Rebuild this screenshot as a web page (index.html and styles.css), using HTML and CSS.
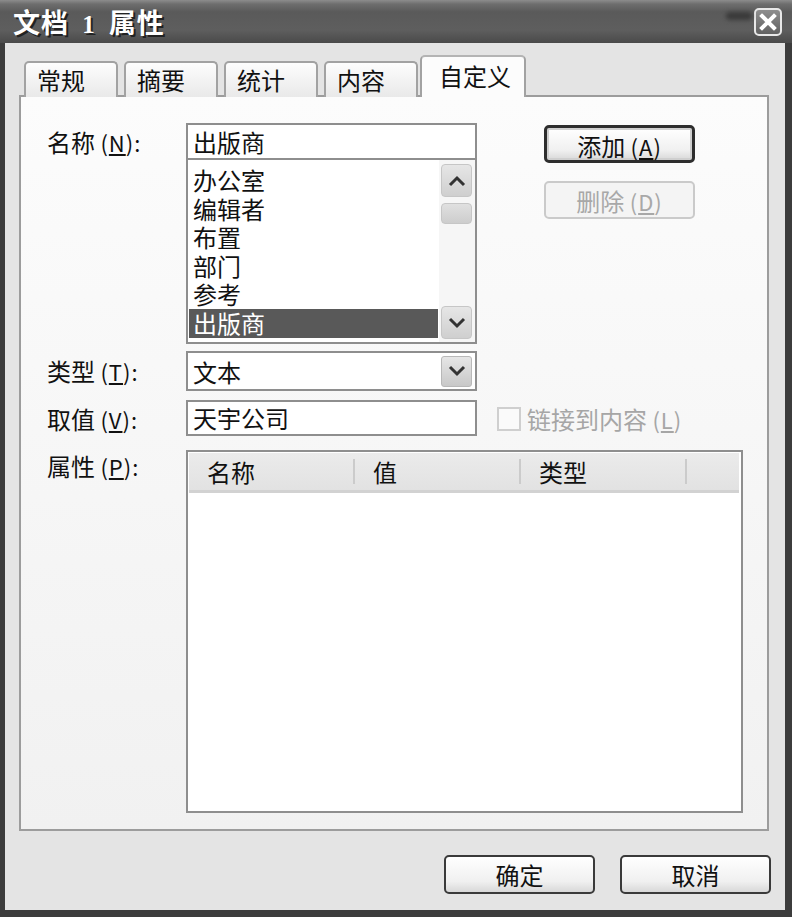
FILE: index.html
```html
<!DOCTYPE html>
<html lang="zh-CN">
<head>
    <meta charset="UTF-8">
    <title>文档 1 属性</title>
    <link rel="stylesheet" href="styles.css">
</head>
<body>
    <div class="window">
        <div class="titlebar">
            <span class="title">文档 <span class="num">1</span> 属性</span>
            <span class="swoosh"></span>
            <span class="close">
                <svg width="18" height="18" viewBox="0 0 18 18">
                    <path d="M3 3 L15 15 M15 3 L3 15" stroke="#fff" stroke-width="4" stroke-linecap="square"/>
                </svg>
            </span>
        </div>

        <div class="body">
            <div class="tabs">
                <div class="tab">常规</div>
                <div class="tab">摘要</div>
                <div class="tab">统计</div>
                <div class="tab">内容</div>
                <div class="tab active">自定义</div>
            </div>

            <div class="panel">
                <div class="row top-row">
                    <div class="lbl">名称 <span class="key">(<u>N</u>):</span></div>
                    <div class="name-col">
                        <div class="field name-field">出版商</div>
                        <div class="listbox">
                            <div class="items">
                                <div class="item">办公室</div>
                                <div class="item">编辑者</div>
                                <div class="item">布置</div>
                                <div class="item">部门</div>
                                <div class="item">参考</div>
                                <div class="item selected">出版商</div>
                            </div>
                            <div class="scrollbar">
                                <div class="sb-btn">
                                    <svg width="18" height="12" viewBox="0 0 18 12"><path d="M2 10 L9 3 L16 10" fill="none" stroke="#333" stroke-width="3"/></svg>
                                </div>
                                <div class="sb-thumb"></div>
                                <div class="sb-track"></div>
                                <div class="sb-btn">
                                    <svg width="18" height="12" viewBox="0 0 18 12"><path d="M2 2 L9 9 L16 2" fill="none" stroke="#333" stroke-width="3"/></svg>
                                </div>
                            </div>
                        </div>
                    </div>
                    <div class="side-buttons">
                        <button class="btn default">添加 <span class="key">(<u>A</u>)</span></button>
                        <button class="btn disabled">删除 <span class="key">(<u>D</u>)</span></button>
                    </div>
                </div>

                <div class="row type-row">
                    <div class="lbl">类型 <span class="key">(<u>T</u>):</span></div>
                    <div class="field combo">
                        <span>文本</span>
                        <span class="drop">
                            <svg width="18" height="12" viewBox="0 0 18 12"><path d="M2 2 L9 9 L16 2" fill="none" stroke="#333" stroke-width="3"/></svg>
                        </span>
                    </div>
                </div>

                <div class="row value-row">
                    <div class="lbl">取值 <span class="key">(<u>V</u>):</span></div>
                    <div class="field value-field">天宇公司</div>
                    <div class="check">
                        <span class="box"></span>
                        <span>链接到内容 <span class="key">(<u>L</u>)</span></span>
                    </div>
                </div>

                <div class="row props-row">
                    <div class="lbl props-lbl">属性 <span class="key">(<u>P</u>):</span></div>
                    <div class="listview">
                        <div class="lv-head">
                            <div class="col">名称</div>
                            <div class="col">值</div>
                            <div class="col">类型</div>
                            <div class="col last"></div>
                        </div>
                    </div>
                </div>
            </div>

            <div class="footer">
                <button class="btn">确定</button>
                <button class="btn">取消</button>
            </div>
        </div>
    </div>
</body>
</html>
```

FILE: styles.css
```css
body {
    margin: 0;
    font-family: "Noto Sans CJK SC", "DejaVu Sans", sans-serif;
    font-size: 24px;
    color: #111;
    background: #fff;
}
.window {
    width: 792px;
    height: 917px;
    background: #3c3c3c;
    display: flex;
    flex-direction: column;
}
.titlebar {
    height: 43px;
    box-sizing: border-box;
    display: flex;
    align-items: center;
    padding: 0 10px 0 13px;
    background: linear-gradient(#8c8c8c 0, #6e6e6e 4px, #5a5a5a 12px, #5e5e5e 30px, #4a4a4a 43px);
}
.title {
    color: #fff;
    font-weight: bold;
    font-size: 27px;
    letter-spacing: 1px;
    word-spacing: 6px;
    text-shadow: 2px 2px 0 #222;
    flex: 1;
}
.title .num {
    font-family: "Liberation Serif", serif;
    font-size: 25px;
}
.swoosh {
    width: 26px;
    height: 8px;
    margin-right: 2px;
    border-radius: 4px;
    background: #3a3a3a;
    filter: blur(2px);
    align-self: flex-start;
    margin-top: 12px;
}
.close {
    width: 28px;
    height: 28px;
    box-sizing: border-box;
    border: 2px solid #e8e8e8;
    border-radius: 5px;
    background: linear-gradient(#8e8e8e, #626262);
    display: flex;
    align-items: center;
    justify-content: center;
    margin-top: 1px;
}
.body {
    flex: 1;
    margin: 0 7px 7px 5px;
    background: #e4e4e4;
    padding: 14px 14px 0 14px;
    display: flex;
    flex-direction: column;
}

/* tabs */
.tabs {
    display: flex;
    align-items: flex-end;
    height: 40px;
    padding-left: 5px;
    position: relative;
    z-index: 1;
    margin-bottom: -2px;
}
.tab {
    width: 94px;
    height: 36px;
    box-sizing: border-box;
    margin-right: 6px;
    padding-left: 11px;
    line-height: 34px;
    border: 2px solid #a2a2a2;
    border-bottom: none;
    border-radius: 5px 5px 0 0;
    background: linear-gradient(#fdfdfd, #e9e9e9);
}
.tab.active {
    width: 106px;
    height: 42px;
    margin-left: -4px;
    padding-left: 17px;
    line-height: 38px;
    background: #fcfcfc;
    border-top-color: #b4b4b4;
}
.panel {
    height: 736px;
    box-sizing: border-box;
    margin-right: 2px;
    border: 2px solid #9c9c9c;
    background: linear-gradient(#fcfcfc, #f1f1f1);
    padding: 26px 0 0 26px;
}

/* rows */
.row {
    display: flex;
    align-items: flex-start;
}
.lbl {
    width: 139px;
    flex-shrink: 0;
    line-height: 37px;
}
.key {
    font-size: 22px;
    letter-spacing: 1px;
}
.field {
    width: 291px;
    box-sizing: border-box;
    border: 2px solid #8e8e8e;
    background: #fff;
    padding-left: 5px;
}
.name-field {
    height: 37px;
    line-height: 33px;
}
.listbox {
    width: 291px;
    height: 184px;
    box-sizing: border-box;
    border: 2px solid #8e8e8e;
    border-top: none;
    background: #fff;
    display: flex;
}
.items {
    flex: 1;
    padding: 6px 1px 0 1px;
}
.item {
    height: 28.6px;
    line-height: 28.6px;
    padding-left: 4px;
}
.item.selected {
    background: #595959;
    color: #fff;
}
.scrollbar {
    width: 36px;
    display: flex;
    flex-direction: column;
    padding: 4px 3px 3px 2px;
    box-sizing: border-box;
    background: #f6f6f6;
}
.sb-btn {
    height: 31px;
    border: 1px solid #c6c6c6;
    border-radius: 4px;
    background: linear-gradient(#e6e6e6, #cfcfcf);
    display: flex;
    align-items: center;
    justify-content: center;
}
.sb-thumb {
    height: 19px;
    margin-top: 6px;
    border: 1px solid #c6c6c6;
    border-radius: 4px;
    background: linear-gradient(#e0e0e0, #cdcdcd);
}
.sb-track {
    flex: 1;
}
.side-buttons {
    display: flex;
    flex-direction: column;
    gap: 18px;
    margin: 2px 0 0 67px;
}
.btn {
    width: 151px;
    height: 38px;
    box-sizing: border-box;
    font-family: inherit;
    font-size: 24px;
    color: #111;
    border: 2px solid #3a3a3a;
    border-radius: 5px;
    background: linear-gradient(#ffffff, #f0f0f0 70%, #d8d8d8);
    padding: 0;
}
.btn.default {
    border: 3px solid #2e2e2e;
    box-shadow: inset 0 0 0 2px #cfcfcf;
}
.btn.disabled {
    color: #a8a8a8;
    border-color: #cacaca;
    background: #f4f4f4;
}
.type-row {
    margin-top: 7px;
}
.type-row .lbl {
    line-height: 40px;
}
.combo {
    height: 40px;
    display: flex;
    align-items: center;
    justify-content: space-between;
    padding-right: 3px;
}
.drop {
    width: 31px;
    height: 31px;
    box-sizing: border-box;
    border: 1px solid #b8b8b8;
    border-radius: 3px;
    background: linear-gradient(#e6e6e6, #c8c8c8);
    display: flex;
    align-items: center;
    justify-content: center;
}
.value-row {
    margin-top: 9px;
}
.value-field {
    height: 36px;
    line-height: 32px;
}
.check {
    display: flex;
    align-items: center;
    margin: 7px 0 0 20px;
    color: #a6a6a6;
    line-height: 24px;
}
.check .box {
    width: 24px;
    height: 24px;
    box-sizing: border-box;
    border: 2px solid #cfcfcf;
    background: #fafafa;
    margin-right: 6px;
}
.props-row {
    margin-top: 12px;
}
.props-lbl {
    line-height: 32px;
}
.listview {
    width: 557px;
    height: 363px;
    box-sizing: border-box;
    border: 2px solid #8e8e8e;
    background: #fff;
    padding: 1px 2px 0 1px;
}
.lv-head {
    display: flex;
    height: 40px;
    background: linear-gradient(#ebebeb, #e2e2e2);
    border-bottom: 3px solid #d2d2d2;
    box-sizing: border-box;
}
.col {
    width: 166px;
    box-sizing: border-box;
    padding-left: 18px;
    line-height: 38px;
    position: relative;
}
.col::after {
    content: '';
    position: absolute;
    right: 0;
    top: 6px;
    bottom: 6px;
    width: 2px;
    background: #cbcbcb;
}
.col.last {
    flex: 1;
}
.col.last::after {
    display: none;
}
.footer {
    display: flex;
    justify-content: flex-end;
    gap: 25px;
    margin-top: 24px;
}
.footer .btn {
    height: 39px;
}
```
